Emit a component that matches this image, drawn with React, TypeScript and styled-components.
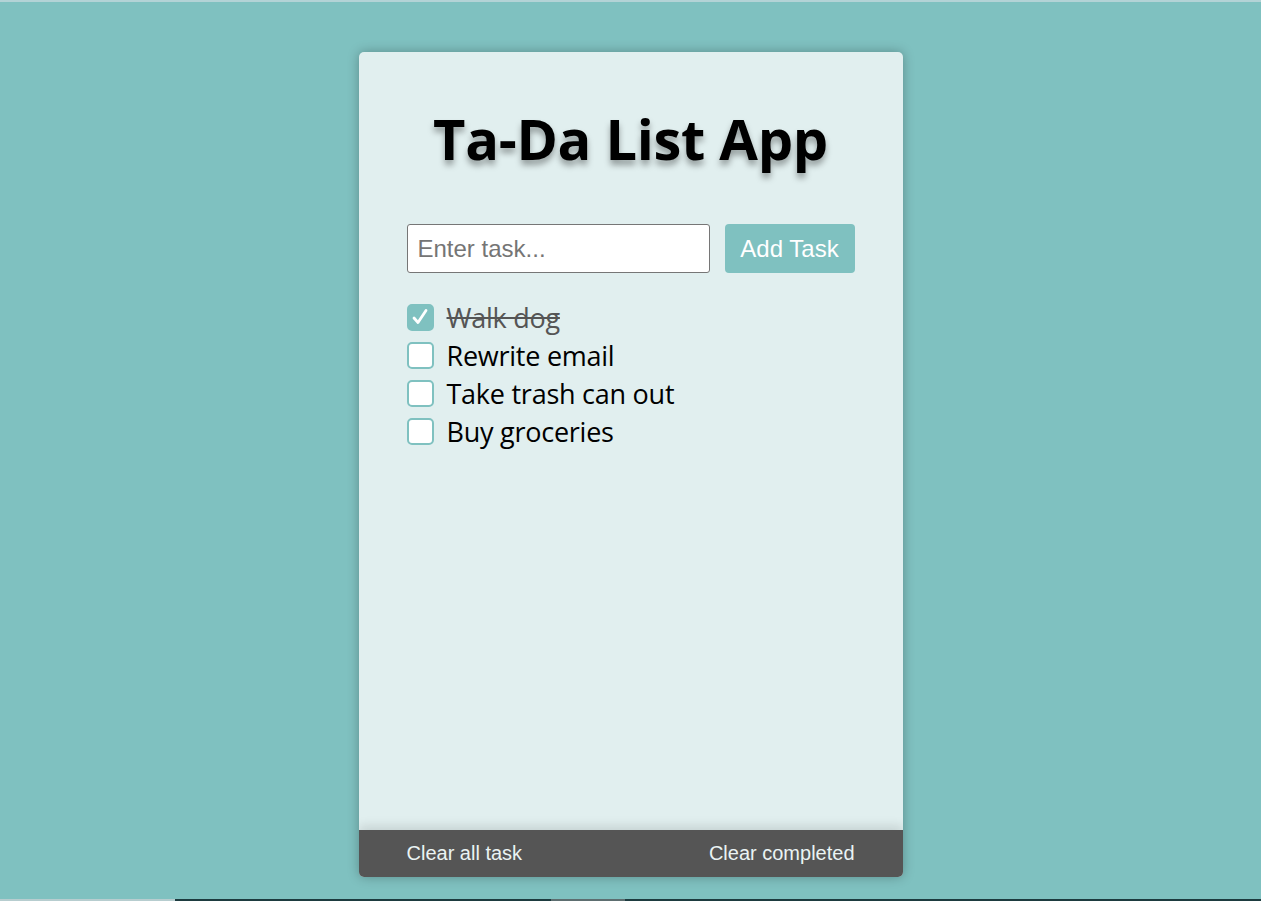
import React, { useState } from "react";
import styled, { createGlobalStyle } from "styled-components";

const Global = createGlobalStyle`
  html, body { margin: 0; padding: 0; height: 100%; }
  body { background: #7fc1c0; font-family: "Liberation Sans", Arial, sans-serif; }
  #root { height: 100%; }
  * { box-sizing: border-box; }
`;

const Page = styled.div`
  height: 100vh;
  display: flex;
  flex-direction: column;
  background: #7fc1c0;
  overflow: hidden;
`;

const TopLine = styled.div`
  height: 2px;
  flex: none;
  background: #b3d3d6;
`;

const Main = styled.main`
  flex: 1;
  display: flex;
  justify-content: center;
  padding-top: 50px;
`;

const Card = styled.section`
  width: 544px;
  height: 825px;
  background: #e1efef;
  border-radius: 5px;
  box-shadow: 0 0 12px rgba(0, 0, 0, 0.28);
  display: flex;
  flex-direction: column;
  overflow: hidden;
`;

const Body = styled.div`
  flex: 1;
  padding: 48px 48px 0;
`;

const Title = styled.h1`
  margin: 0 0 48px;
  text-align: center;
  font-family: "Open Sans", "Noto Sans", sans-serif;
  font-weight: 700;
  font-size: 56px;
  line-height: 76px;
  letter-spacing: -0.3px;
  color: #000;
  text-shadow: 0 5px 6px rgba(0, 0, 0, 0.35);
`;

const Form = styled.form`
  display: flex;
  gap: 15px;
  margin-bottom: 25px;
`;

const Input = styled.input`
  width: 303px;
  height: 49px;
  border: 1px solid #767676;
  border-radius: 3px;
  background: #fff;
  padding: 0 10px;
  font-family: "Liberation Sans", Arial, sans-serif;
  font-size: 24px;
  color: #222;
  outline: none;
  &::placeholder { color: #757575; }
`;

const AddButton = styled.button`
  width: 130px;
  height: 49px;
  border: none;
  border-radius: 4px;
  background: #7fc1c0;
  color: #fff;
  font-family: "Liberation Sans", Arial, sans-serif;
  font-size: 24px;
  padding: 0;
  cursor: pointer;
`;

const List = styled.ul`
  list-style: none;
  margin: 0;
  padding: 0;
`;

const Item = styled.li`
  display: flex;
  align-items: center;
  height: 38px;
  gap: 13px;
`;

const Box = styled.span<{ $checked: boolean }>`
  width: 27px;
  height: 27px;
  flex: none;
  border: 2.5px solid #7fc1c0;
  border-radius: 5px;
  background: ${(p) => (p.$checked ? "#7fc1c0" : "#fff")};
  display: flex;
  align-items: center;
  justify-content: center;
  cursor: pointer;
`;

const Label = styled.span<{ $done: boolean }>`
  font-family: "Open Sans", "Noto Sans", sans-serif;
  font-size: 27px;
  letter-spacing: -0.25px;
  color: ${(p) => (p.$done ? "#555" : "#000")};
  text-decoration: ${(p) => (p.$done ? "line-through" : "none")};
  text-decoration-thickness: 2px;
`;

const Footer = styled.footer`
  height: 47px;
  flex: none;
  background: #555;
  box-shadow: 0 -4px 10px rgba(0, 0, 0, 0.12);
  display: flex;
  align-items: center;
  justify-content: space-between;
  padding: 0 48px;
`;

const FooterButton = styled.button`
  border: none;
  background: none;
  padding: 0;
  color: #eaf3f3;
  font-family: "Liberation Sans", Arial, sans-serif;
  font-size: 20px;
  cursor: pointer;
`;

const BottomStrip = styled.div`
  height: 2px;
  flex: none;
  display: flex;
  background: #1d3b3f;
`;

const Segment = styled.div<{ $w: number; $c: string; $ml?: number }>`
  width: ${(p) => p.$w}px;
  margin-left: ${(p) => p.$ml ?? 0}px;
  background: ${(p) => p.$c};
`;

type Task = { id: number; text: string; done: boolean };

const Check = () => (
  <svg width="20" height="20" viewBox="0 0 20 20" fill="none">
    <path
      d="M4 11 L8 15.5 L16 3.5"
      stroke="#fff"
      strokeWidth="2.8"
      strokeLinecap="round"
      strokeLinejoin="round"
    />
  </svg>
);

export default function App() {
  const [tasks, setTasks] = useState<Task[]>([
    { id: 1, text: "Walk dog", done: true },
    { id: 2, text: "Rewrite email", done: false },
    { id: 3, text: "Take trash can out", done: false },
    { id: 4, text: "Buy groceries", done: false },
  ]);
  const [value, setValue] = useState("");

  const add = (e: React.FormEvent) => {
    e.preventDefault();
    if (!value.trim()) return;
    setTasks((t) => [...t, { id: Date.now(), text: value.trim(), done: false }]);
    setValue("");
  };

  return (
    <Page>
      <Global />
      <TopLine />
      <Main>
        <Card>
          <Body>
            <Title>Ta-Da List App</Title>
            <Form onSubmit={add}>
              <Input
                placeholder="Enter task..."
                value={value}
                onChange={(e) => setValue(e.target.value)}
              />
              <AddButton type="submit">Add Task</AddButton>
            </Form>
            <List>
              {tasks.map((t) => (
                <Item key={t.id}>
                  <Box
                    $checked={t.done}
                    onClick={() =>
                      setTasks((all) =>
                        all.map((x) => (x.id === t.id ? { ...x, done: !x.done } : x))
                      )
                    }
                  >
                    {t.done && <Check />}
                  </Box>
                  <Label $done={t.done}>{t.text}</Label>
                </Item>
              ))}
            </List>
          </Body>
          <Footer>
            <FooterButton onClick={() => setTasks([])}>Clear all task</FooterButton>
            <FooterButton onClick={() => setTasks((all) => all.filter((x) => !x.done))}>
              Clear completed
            </FooterButton>
          </Footer>
        </Card>
      </Main>
      <BottomStrip>
        <Segment $w={175} $c="#b7cdcf" />
        <Segment $w={74} $c="#5d6e70" $ml={376} />
      </BottomStrip>
    </Page>
  );
}
